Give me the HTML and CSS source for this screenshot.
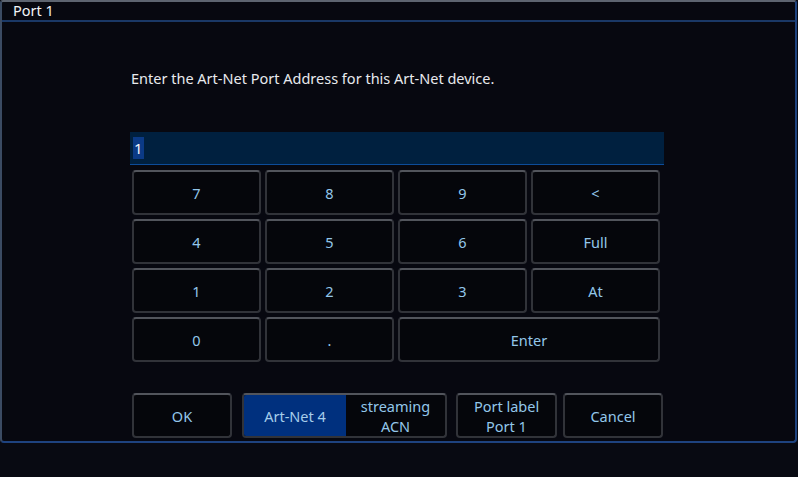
FILE: index.html
```html
<!DOCTYPE html>
<html>
<head>
<meta charset="utf-8">
<link rel="stylesheet" href="styles.css">
</head>
<body>
<div class="window">
  <div class="title">Port 1</div>
  <div class="content">
    <p class="prompt">Enter the Art-Net Port Address for this Art-Net device.</p>
    <div class="input"><span class="sel">1</span></div>
    <div class="keypad">
      <div class="key">7</div>
      <div class="key">8</div>
      <div class="key">9</div>
      <div class="key">&lt;</div>
      <div class="key">4</div>
      <div class="key">5</div>
      <div class="key">6</div>
      <div class="key">Full</div>
      <div class="key">1</div>
      <div class="key">2</div>
      <div class="key">3</div>
      <div class="key">At</div>
      <div class="key">0</div>
      <div class="key">.</div>
      <div class="key wide">Enter</div>
    </div>
    <div class="actions">
      <div class="btn ok">OK</div>
      <div class="toggle">
        <div class="opt on">Art-Net 4</div>
        <div class="opt">streaming<br>ACN</div>
      </div>
      <div class="btn label">Port label<br>Port 1</div>
      <div class="btn cancel">Cancel</div>
    </div>
  </div>
</div>
</body>
</html>
```
FILE: styles.css
```css
html, body {
  margin: 0;
  padding: 0;
  background: #080a12;
}
body {
  width: 798px;
  height: 477px;
  font-family: "Noto Sans", "Open Sans", sans-serif;
  font-size: 14.5px;
  color: #e8eaee;
}
.window {
  box-sizing: border-box;
  width: 797px;
  height: 443px;
  background: #070810;
  border: 2px solid #1e437f;
  border-top-color: #5d6470;
  border-left-color: #3b4b63;
  border-radius: 3px 3px 4px 4px;
}
.title {
  height: 18px;
  line-height: 17px;
  padding-left: 11px;
  border-bottom: 2px solid #1a3866;
  color: #f2f4f8;
}
.content {
  padding-left: 128px;
}
.prompt {
  margin: 46px 0 0 1px;
  height: 20px;
  line-height: 20px;
}
.input {
  box-sizing: border-box;
  width: 534px;
  height: 33px;
  margin-top: 44px;
  background: #00203f;
  border-bottom: 1px solid #0c4c9a;
  padding: 5px 0 0 3px;
}
.sel {
  display: inline-block;
  height: 22px;
  line-height: 22px;
  padding: 0 1px;
  background: #0b3a86;
  color: #f4f6fa;
  font-size: 15px;
}
.keypad {
  display: grid;
  grid-template-columns: repeat(4, 129px);
  grid-auto-rows: 45px;
  column-gap: 4px;
  row-gap: 4px;
  margin: 5px 0 0 2px;
}
.key, .btn, .toggle {
  box-sizing: border-box;
  background: #05060b;
  border: 2px solid #313339;
  border-top-color: #52555c;
  border-radius: 4px;
  color: #93c6ea;
  display: flex;
  align-items: center;
  justify-content: center;
  text-align: center;
}
.key.wide {
  grid-column: span 2;
}
.actions {
  display: flex;
  margin: 31px 0 0 2px;
  height: 45px;
}
.btn {
  width: 100px;
  height: 45px;
  line-height: 20px;
}
.ok {
  margin-right: 10px;
}
.toggle {
  width: 205px;
  height: 45px;
  overflow: hidden;
  margin-right: 9px;
  align-items: stretch;
  justify-content: flex-start;
}
.opt {
  flex: 1;
  display: flex;
  align-items: center;
  justify-content: center;
  line-height: 20px;
}
.opt.on {
  flex: 0 0 102px;
  background: #00307e;
  color: #a6cdea;
}
.label {
  width: 101px;
  margin-right: 6px;
}
```
